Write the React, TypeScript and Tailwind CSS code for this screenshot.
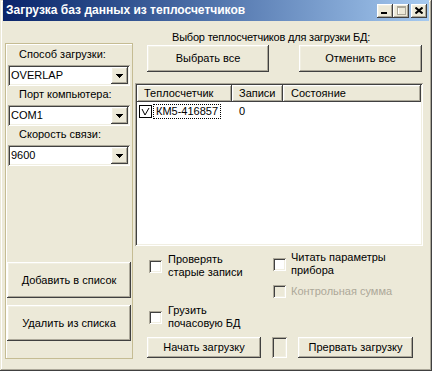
const raised =
  "shadow-[inset_-1px_-1px_#404040,inset_1px_1px_#ffffff,inset_-2px_-2px_#aca899,inset_2px_2px_#f1efe2]";
const sunken =
  "shadow-[inset_1px_1px_#aca899,inset_-1px_-1px_#ffffff,inset_2px_2px_#404040,inset_-2px_-2px_#f1efe2]";

function DropArrow() {
  return (
    <svg width="7" height="4" viewBox="0 0 7 4" shapeRendering="crispEdges">
      <rect x="0" y="0" width="7" height="1" fill="#000" />
      <rect x="1" y="1" width="5" height="1" fill="#000" />
      <rect x="2" y="2" width="3" height="1" fill="#000" />
      <rect x="3" y="3" width="1" height="1" fill="#000" />
    </svg>
  );
}

function Combo({ value }: { value: string }) {
  return (
    <div className={`ml-[2px] flex h-[21px] w-[122px] items-center bg-white pl-[3px] pr-[2px] ${sunken}`}>
      <span className="flex-1">{value}</span>
      <div className={`flex h-[17px] w-[17px] items-center justify-center bg-[#ece9d8] ${raised}`}>
        <DropArrow />
      </div>
    </div>
  );
}

function Btn({ children, className }: { children: React.ReactNode; className: string }) {
  return (
    <div className={`flex items-center justify-center bg-[#ece9d8] ${raised} ${className}`}>{children}</div>
  );
}

function Check({ disabled }: { disabled?: boolean }) {
  return <div className={`h-[13px] w-[13px] shrink-0 ${disabled ? "bg-[#ece9d8]" : "bg-white"} ${sunken}`} />;
}

function TitleButton({ children }: { children: React.ReactNode }) {
  return (
    <div className={`flex h-[14px] w-[16px] items-center justify-center bg-[#ece9d8] ${raised}`}>{children}</div>
  );
}

export default function App() {
  return (
    <div className="h-[371px] w-[432px] bg-[#ece9d8] px-[3px] font-['Liberation_Sans',sans-serif] text-[11px] leading-[13px] text-black shadow-[inset_-1px_-1px_#404040,inset_1px_1px_#ece9d8,inset_-2px_-2px_#aca899,inset_2px_2px_#ffffff]">
      {/* title bar */}
      <div className="flex h-[21px] items-center bg-linear-to-r from-[#0a246a] to-[#a6caf0] pl-[3px] pr-[2px]">
        <span className="flex-1 text-[12px] font-bold text-white">Загрузка баз данных из теплосчетчиков</span>
        <div className="flex">
          <TitleButton>
            <svg width="8" height="7" viewBox="0 0 8 7" shapeRendering="crispEdges">
              <rect x="0" y="5" width="6" height="2" fill="#000" />
            </svg>
          </TitleButton>
          <TitleButton>
            <svg width="9" height="9" viewBox="0 0 9 9" shapeRendering="crispEdges">
              <rect x="1" y="1" width="8" height="8" fill="none" stroke="#fff" />
              <rect x="0.5" y="0.5" width="8" height="8" fill="none" stroke="#aca899" />
              <rect x="0" y="1" width="9" height="1" fill="#aca899" />
            </svg>
          </TitleButton>
          <div className="ml-[2px]">
            <TitleButton>
              <svg width="8" height="7" viewBox="0 0 8 7">
                <path d="M0.5 0.5L7.5 6.5M7.5 0.5L0.5 6.5" stroke="#000" strokeWidth="2" />
              </svg>
            </TitleButton>
          </div>
        </div>
      </div>

      <div className="flex">
        {/* left group */}
        <div className="ml-[2px] mt-[22px] flex h-[316px] w-[128px] flex-col border border-[#c5bc93] shadow-[inset_1px_1px_#ffffff]">
          <div className="ml-[13px] mt-[4px]">Способ загрузки:</div>
          <div className="mt-[4px]">
            <Combo value="OVERLAP" />
          </div>
          <div className="ml-[13px] mt-[2px]">Порт компьютера:</div>
          <div className="mt-[4px]">
            <Combo value="COM1" />
          </div>
          <div className="ml-[13px] mt-[2px]">Скорость связи:</div>
          <div className="mt-[4px]">
            <Combo value="9600" />
          </div>
          <Btn className="ml-[1px] mt-[96px] h-[36px] w-[124px]">Добавить в список</Btn>
          <Btn className="ml-[1px] mt-[7px] h-[36px] w-[124px]">Удалить из списка</Btn>
        </div>

        {/* right column */}
        <div className="ml-[2px] flex w-[288px] flex-col">
          <div className="mt-[10px] pl-[37px] tracking-[-0.2px]">Выбор теплосчетчиков для загрузки БД:</div>
          <div className="mt-[1px] flex gap-[30px] pl-[12px]">
            <Btn className="h-[27px] w-[122px]">Выбрать все</Btn>
            <Btn className="h-[27px] w-[123px]">Отменить все</Btn>
          </div>

          <div className={`mt-[11px] h-[163px] bg-white p-[2px] ${sunken}`}>
            <div className="flex h-[17px]">
              <div className={`flex w-[95px] items-center bg-[#ece9d8] pl-[7px] ${raised}`}>Теплосчетчик</div>
              <div className={`flex w-[51px] items-center bg-[#ece9d8] pl-[7px] ${raised}`}>Записи</div>
              <div className={`flex flex-1 items-center bg-[#ece9d8] pl-[8px] ${raised}`}>Состояние</div>
            </div>
            <div className="mt-[2px] flex h-[15px] items-center">
              <div className="flex w-[95px] items-center pl-[2px]">
                <svg width="13" height="13" viewBox="0 0 13 13" shapeRendering="crispEdges">
                  <rect x="0.5" y="0.5" width="12" height="12" fill="#fff" stroke="#000" />
                  <path d="M3 4L6 10L10 3" fill="none" stroke="#000" strokeWidth="1" shapeRendering="auto" />
                </svg>
                <span className="ml-[1px] flex h-[15px] items-center border border-dotted border-black px-[2px]">
                  КМ5-416857
                </span>
              </div>
              <div className="pl-[7px]">0</div>
            </div>
          </div>

          {/* options */}
          <div className="flex h-[91px]">
            <div className="ml-[14px] flex w-[124px] flex-col">
              <div className="mt-[7px] flex items-center gap-[6px]">
                <Check />
                <span>
                  Проверять
                  <br />
                  старые записи
                </span>
              </div>
              <div className="mt-[25px] flex items-center gap-[6px]">
                <Check />
                <span>
                  Грузить
                  <br />
                  почасовую БД
                </span>
              </div>
            </div>
            <div className="flex flex-col">
              <div className="mt-[5px] flex items-center gap-[5px]">
                <Check />
                <span>
                  Читать параметры
                  <br />
                  прибора
                </span>
              </div>
              <div className="mt-[8px] flex items-center gap-[5px]">
                <Check disabled />
                <span className="text-[#aca899]">Контрольная сумма</span>
              </div>
            </div>
          </div>

          <div className="flex pl-[12px]">
            <Btn className="h-[21px] w-[114px]">Начать загрузку</Btn>
            <div className={`ml-[11px] h-[21px] w-[15px] bg-[#ece9d8] ${sunken}`} />
            <Btn className="ml-[11px] h-[21px] w-[115px]">Прервать загрузку</Btn>
          </div>
        </div>
      </div>
    </div>
  );
}
